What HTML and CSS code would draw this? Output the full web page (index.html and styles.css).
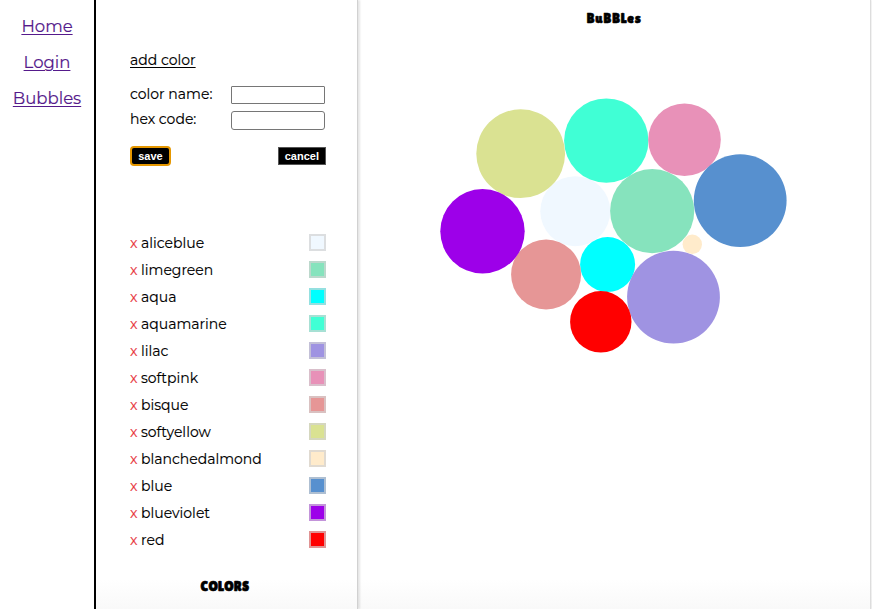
FILE: index.html
```html
<!DOCTYPE html>
<html lang="en">
<head>
<meta charset="utf-8">
<title>Bubbles</title>
<link rel="stylesheet" href="styles.css">
</head>
<body>
<div class="app">
  <nav class="nav">
    <a href="#">Home</a>
    <a href="#">Login</a>
    <a href="#">Bubbles</a>
  </nav>
  <main class="page">
    <section class="colors">
      <form class="editor">
        <div class="legend"><span>add color</span></div>
        <label class="field"><span>color name:</span><input class="square" type="text"></label>
        <label class="field"><span>hex code:</span><input type="text"></label>
        <div class="buttons"><button class="save" type="button">save</button><button type="button">cancel</button></div>
      </form>
      <ul class="list">
        <li><i>x</i><span>aliceblue</span><b class="swatch aliceblue"></b></li>
        <li><i>x</i><span>limegreen</span><b class="swatch limegreen"></b></li>
        <li><i>x</i><span>aqua</span><b class="swatch aqua"></b></li>
        <li><i>x</i><span>aquamarine</span><b class="swatch aquamarine"></b></li>
        <li><i>x</i><span>lilac</span><b class="swatch lilac"></b></li>
        <li><i>x</i><span>softpink</span><b class="swatch softpink"></b></li>
        <li><i>x</i><span>bisque</span><b class="swatch bisque"></b></li>
        <li><i>x</i><span>softyellow</span><b class="swatch softyellow"></b></li>
        <li><i>x</i><span>blanchedalmond</span><b class="swatch blanchedalmond"></b></li>
        <li><i>x</i><span>blue</span><b class="swatch blue"></b></li>
        <li><i>x</i><span>blueviolet</span><b class="swatch blueviolet"></b></li>
        <li><i>x</i><span>red</span><b class="swatch red"></b></li>
      </ul>
      <h2 class="title"><span>COLORS</span></h2>
    </section>
    <section class="chart">
      <h2 class="title"><span>BuBBLes</span></h2>
      <svg class="pack" width="400" height="300" viewBox="420 80 400 300">
        <circle class="aliceblue" cx="575.3" cy="211.2" r="35"/>
        <circle class="limegreen" cx="652.2" cy="211.1" r="42.1"/>
        <circle class="aqua" cx="607.6" cy="264.6" r="27.5"/>
        <circle class="aquamarine" cx="606.3" cy="140.6" r="42.2"/>
        <circle class="lilac" cx="673.5" cy="297.1" r="46.4"/>
        <circle class="softpink" cx="684.5" cy="139.8" r="36.3"/>
        <circle class="bisque" cx="546.1" cy="274.5" r="35"/>
        <circle class="softyellow" cx="520.7" cy="153.7" r="44.4"/>
        <circle class="blanchedalmond" cx="692.3" cy="244.3" r="9.7"/>
        <circle class="blue" cx="740.2" cy="200.6" r="46.4"/>
        <circle class="blueviolet" cx="482.5" cy="231.3" r="42.2"/>
        <circle class="red" cx="600.8" cy="321.8" r="30.7"/>
      </svg>
    </section>
  </main>
</div>
</body>
</html>
```
FILE: styles.css
```css
* { box-sizing: border-box; }
body { margin: 0; background: #fff; color: #000; overflow: hidden; font-family: Montserrat, Inter, sans-serif; -webkit-text-stroke: .15px currentColor; }
.app { display: flex; width: 872px; height: 609px; }
.nav { flex: 0 0 96px; border-right: 2px solid #000; padding-top: 8px; display: flex; flex-direction: column; align-items: center; box-shadow: 0 0 3px rgba(0,0,0,.25); }
.nav a { height: 36px; line-height: 37px; font-size: 16.5px; color: #551a8b; text-decoration-thickness: 1px; text-underline-offset: 2px; white-space: nowrap; }
.page { flex: 1; display: flex; background: linear-gradient(#fff 580px, #f9f9f9 609px); }
.colors { flex: 0 0 262px; padding: 50px 31px 0 34px; border-right: 1px solid #d2d2d2; box-shadow: 2px 0 2px rgba(0,0,0,.1); font-size: 14px; }
.editor { height: 179px; }
.legend { height: 35px; line-height: 21px; text-decoration: underline; text-decoration-thickness: 1px; text-underline-offset: 2px; }
.field { display: flex; justify-content: space-between; height: 25px; line-height: 19px; }
.field input { width: 94px; height: 19px; margin: 1px 1px 0 0; padding: 0; border: 1px solid #767676; border-radius: 3px; background: #fff; }
.field .square { height: 18px; border-radius: 1px; }
.buttons { display: flex; justify-content: space-between; padding: 12px 0 0 2px; }
.buttons button { height: 18px; padding: 0 6px 1px; margin-right: 0; border: 1px solid #555; background: #000; color: #fff; font: bold 11px/14px "Liberation Sans", sans-serif; -webkit-text-stroke: 0; }
.buttons .save { width: 37px; border: 0; border-radius: 2px; box-shadow: 0 0 0 2px #e59700; height: 16px; margin-top: 1px; }
.list { margin: 0; padding: 0; list-style: none; }
.list li { display: flex; height: 27px; line-height: 29px; }
.list i { width: 11px; font-style: normal; color: #e8383d; }
.swatch { width: 17px; height: 17px; margin: 5px 0 0 auto; border: 2px solid rgba(211,211,211,.7); }
.title { margin: 0; text-align: center; font: 400 13.5px/18px "Luckiest Guy", "Lilita One", Inter, sans-serif; -webkit-text-stroke: .6px #000; }
.colors .title { padding: 25px 6px 0 0; letter-spacing: .25px; }
.chart { flex: 0 0 513px; display: flex; flex-direction: column; border-right: 1px solid #ddd; box-shadow: 1px 0 2px rgba(0,0,0,.08); }
.chart .title { height: 80px; padding-top: 10px; letter-spacing: .7px; }
.pack { margin-left: 62px; }
.aliceblue { fill: #f0f8ff; background-color: #f0f8ff; }
.limegreen { fill: #86e3bd; background-color: #86e3bd; }
.aqua { fill: #0ff; background-color: #0ff; }
.aquamarine { fill: #40ffd5; background-color: #40ffd5; }
.lilac { fill: #9f93e2; background-color: #9f93e2; }
.softpink { fill: #e891b8; background-color: #e891b8; }
.bisque { fill: #e69696; background-color: #e69696; }
.softyellow { fill: #dae292; background-color: #dae292; }
.blanchedalmond { fill: #ffebcb; background-color: #ffebcb; }
.blue { fill: #5790cf; background-color: #5790cf; }
.blueviolet { fill: #9d00e9; background-color: #9d00e9; }
.red { fill: #f00; background-color: #f00; }
```
